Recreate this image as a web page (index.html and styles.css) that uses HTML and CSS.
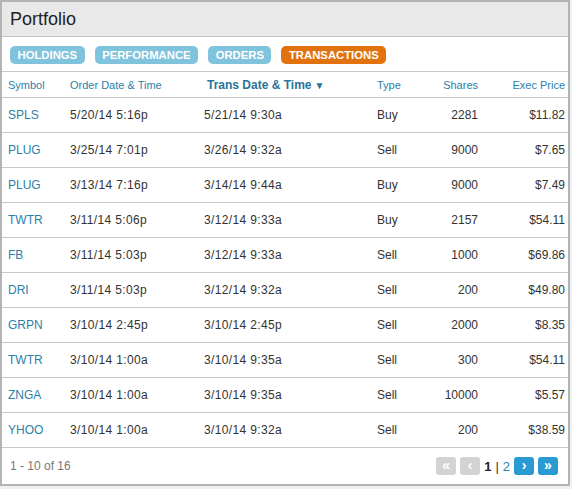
FILE: index.html
```html
<!DOCTYPE html>
<html>
<head>
<meta charset="utf-8">
<link rel="stylesheet" href="styles.css">
</head>
<body>
<div class="panel">
  <div class="panel-head">Portfolio</div>
  <div class="tabs">
    <span class="tab">HOLDINGS</span>
    <span class="tab">PERFORMANCE</span>
    <span class="tab">ORDERS</span>
    <span class="tab active">TRANSACTIONS</span>
  </div>
  <table class="grid">
    <colgroup>
      <col class="c1"><col class="c2"><col class="c3"><col class="c4"><col class="c5"><col class="c6">
    </colgroup>
    <thead>
      <tr>
        <th>Symbol</th>
        <th>Order Date &amp; Time</th>
        <th class="sorted">Trans Date &amp; Time<span class="arrow">&#9660;</span></th>
        <th>Type</th>
        <th class="num">Shares</th>
        <th class="num last">Exec Price</th>
      </tr>
    </thead>
    <tbody>
      <tr><td class="sym">SPLS</td><td class="dt">5/20/14 5:16p</td><td class="dt tr">5/21/14 9:30a</td><td>Buy</td><td class="num">2281</td><td class="num last">$11.82</td></tr>
      <tr><td class="sym">PLUG</td><td class="dt">3/25/14 7:01p</td><td class="dt tr">3/26/14 9:32a</td><td>Sell</td><td class="num">9000</td><td class="num last">$7.65</td></tr>
      <tr><td class="sym">PLUG</td><td class="dt">3/13/14 7:16p</td><td class="dt tr">3/14/14 9:44a</td><td>Buy</td><td class="num">9000</td><td class="num last">$7.49</td></tr>
      <tr><td class="sym">TWTR</td><td class="dt">3/11/14 5:06p</td><td class="dt tr">3/12/14 9:33a</td><td>Buy</td><td class="num">2157</td><td class="num last">$54.11</td></tr>
      <tr><td class="sym">FB</td><td class="dt">3/11/14 5:03p</td><td class="dt tr">3/12/14 9:33a</td><td>Sell</td><td class="num">1000</td><td class="num last">$69.86</td></tr>
      <tr><td class="sym">DRI</td><td class="dt">3/11/14 5:03p</td><td class="dt tr">3/12/14 9:32a</td><td>Sell</td><td class="num">200</td><td class="num last">$49.80</td></tr>
      <tr><td class="sym">GRPN</td><td class="dt">3/10/14 2:45p</td><td class="dt tr">3/10/14 2:45p</td><td>Sell</td><td class="num">2000</td><td class="num last">$8.35</td></tr>
      <tr><td class="sym">TWTR</td><td class="dt">3/10/14 1:00a</td><td class="dt tr">3/10/14 9:35a</td><td>Sell</td><td class="num">300</td><td class="num last">$54.11</td></tr>
      <tr><td class="sym">ZNGA</td><td class="dt">3/10/14 1:00a</td><td class="dt tr">3/10/14 9:35a</td><td>Sell</td><td class="num">10000</td><td class="num last">$5.57</td></tr>
      <tr><td class="sym">YHOO</td><td class="dt">3/10/14 1:00a</td><td class="dt tr">3/10/14 9:32a</td><td>Sell</td><td class="num">200</td><td class="num last">$38.59</td></tr>
    </tbody>
  </table>
  <div class="footer">
    <span class="count">1 - 10 of 16</span>
    <div class="pager">
      <span class="pbtn off">&#171;</span>
      <span class="pbtn off">&#8249;</span>
      <span class="page cur">1</span>
      <span class="sep">|</span>
      <span class="page">2</span>
      <span class="pbtn on">&#8250;</span>
      <span class="pbtn on">&#187;</span>
    </div>
  </div>
</div>
</body>
</html>
```
FILE: styles.css
```css
html, body {
  margin: 0;
  padding: 0;
  background: #eef2f4;
  font-family: "Liberation Sans", Arial, sans-serif;
}
.panel {
  box-sizing: border-box;
  width: 570px;
  height: 486px;
  border: 2px solid #b4b4b4;
  background: #fff;
  display: flex;
  flex-direction: column;
}
.panel-head {
  height: 34px;
  background: #e9e9e9;
  border-bottom: 1px solid #c4c4c4;
  font-size: 18px;
  color: #222;
  padding-left: 8px;
  line-height: 35px;
}
.tabs {
  height: 35px;
  flex: none;
  border-bottom: 1px solid #c8c8c8;
  display: flex;
  align-items: center;
  gap: 10px;
  padding-left: 8px;
  padding-top: 1px;
  box-sizing: border-box;
}
.tab {
  display: inline-block;
  height: 18px;
  line-height: 19px;
  padding: 0 7.5px;
  border-radius: 5px;
  background: #80c3dc;
  color: #fff;
  font-weight: bold;
  font-size: 11.3px;
}
.tab.active { background: #e2720e; }
.grid {
  width: 566px;
  border-collapse: collapse;
  table-layout: fixed;
  flex: none;
}
.c1 { width: 62px; }
.c2 { width: 137px; }
.c3 { width: 170px; }
.c4 { width: 60px; }
.c5 { width: 53px; }
.c6 { width: 84px; }
.grid th {
  height: 25px;
  font-size: 11px;
  font-weight: normal;
  color: #2c80a8;
  text-align: left;
  padding: 0 0 0 6px;
  border-bottom: 1px solid #c8c8c8;
  white-space: nowrap;
}
.grid th.sorted { font-weight: bold; color: #2a7399; font-size: 12px; }
.arrow { font-size: 10px; margin-left: 3px; }
.grid td {
  height: 34px;
  font-size: 12px;
  color: #333;
  padding: 0 0 0 6px;
  border-bottom: 1px solid #c8c8c8;
  white-space: nowrap;
}
.grid td.dt { letter-spacing: 0.35px; }
.grid td.tr { padding-left: 3px; }
.grid td.sym { color: #2c80a8; }
.grid .num { text-align: right; padding: 0 6px 0 0; }
.grid .num.last { padding-right: 3px; }
.footer {
  flex: 1;
  display: flex;
  align-items: center;
  justify-content: space-between;
  padding: 0 10px 0 8px;
}
.count { font-size: 12px; color: #777; }
.pager { display: flex; align-items: center; gap: 4px; }
.pbtn {
  width: 20px;
  height: 18px;
  border-radius: 3px;
  color: #fff;
  font-weight: bold;
  font-size: 14px;
  line-height: 17px;
  text-align: center;
}
.pbtn.off { background: #d3d3d3; }
.pbtn.on { background: #2a9bd2; }
.page { font-size: 13px; color: #2c80a8; }
.page.cur { color: #222; font-weight: bold; }
.sep { font-size: 13px; color: #333; }
```
